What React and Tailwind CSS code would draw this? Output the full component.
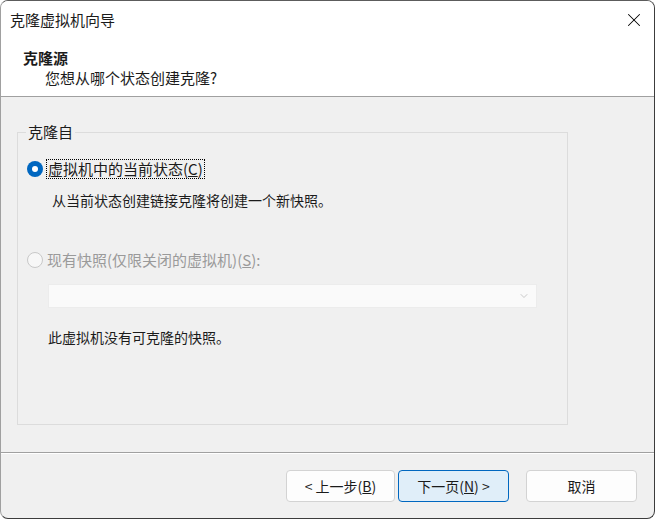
import { X, ChevronDown } from "lucide-react"

const font = { fontFamily: '"Noto Sans CJK SC", "Noto Sans", sans-serif' }

function Radio({ checked, disabled }) {
  if (checked) {
    return (
      <span className="w-[16px] h-[16px] rounded-full bg-[#0067c0] flex items-center justify-center shrink-0">
        <span className="w-[6px] h-[6px] rounded-full bg-white" />
      </span>
    )
  }
  return (
    <span
      className={
        "w-[16px] h-[16px] rounded-full border shrink-0 " +
        (disabled ? "border-[#c8c8c8] bg-[#f7f7f7]" : "border-[#5f5f5f] bg-white")
      }
    />
  )
}

function Button({ children, primary, className = "" }) {
  return (
    <button
      className={
        "h-[32px] rounded-[4px] border text-[14px] leading-[20px] text-[#1b1b1b] " +
        (primary ? "bg-[#e0eef9] border-[#0067c0] " : "bg-[#fdfdfd] border-[#d3d3d3] ") +
        className
      }
    >
      {children}
    </button>
  )
}

export default function App() {
  return (
    <div
      style={font}
      className="w-[655px] h-[519px] overflow-hidden rounded-[8px] border border-[#3c3c3c] border-l-[#a0a0a0] border-t-[#5c5c5c] bg-[#f0f0f0] flex flex-col text-[#1b1b1b]"
    >
      {/* Title bar + header */}
      <div className="bg-white h-[96px] border-b border-[#a0a0a0] flex flex-col shrink-0">
        <div className="h-[37px] flex items-center justify-between pl-[9px] pr-[9px]">
          <span className="text-[15px] leading-[20px]">克隆虚拟机向导</span>
          <X size={22} strokeWidth={1.1} className="text-black" />
        </div>
        <div className="pl-[22px] pt-[10px]">
          <div className="text-[15px] leading-[20px] font-bold">克隆源</div>
          <div className="pl-[22px] text-[15px] leading-[20px]">您想从哪个状态创建克隆?</div>
        </div>
      </div>

      {/* Body */}
      <div className="flex-1 pl-[16px] pt-[25px]">
        <fieldset className="w-[551px] h-[303px] border border-[#dcdcdc] px-0">
          <legend className="ml-[8px] px-[2px] text-[15px] leading-[20px]">克隆自</legend>
          <div className="flex flex-col pl-[9px] pt-[17px]">
            <div className="flex items-center gap-[2px] h-[20px]">
              <Radio checked />
              <span className="ml-[1px] border border-dotted border-black px-[1px] text-[15px] leading-[18px]">
                虚拟机中的当前状态(<span className="underline">C</span>)
              </span>
            </div>
            <div className="pl-[25px] mt-[11px] text-[14px] leading-[20px]">
              从当前状态创建链接克隆将创建一个新快照。
            </div>
            <div className="flex items-center gap-[4px] h-[20px] mt-[40px] text-[#9a9a9a]">
              <Radio disabled />
              <span className="text-[15px] leading-[20px]">
                现有快照(仅限关闭的虚拟机)(<span className="underline">S</span>):
              </span>
            </div>
            <div className="ml-[21px] mt-[14px] w-[489px] h-[24px] bg-[#fafafa] border border-[#ececec] flex items-center justify-end pr-[6px]">
              <ChevronDown size={12} strokeWidth={1.2} className="text-[#a8a8a8]" />
            </div>
            <div className="pl-[21px] mt-[19px] text-[14px] leading-[20px]">此虚拟机没有可克隆的快照。</div>
          </div>
        </fieldset>
      </div>

      {/* Footer */}
      <div className="h-[66px] shrink-0 border-t border-[#a0a0a0] flex flex-col">
        <div className="h-px bg-white" />
        <div className="flex items-center justify-end pr-[17px] pt-[16px]">
          <Button className="w-[109px]">&lt; 上一步(<span className="underline">B</span>)</Button>
          <div className="w-[3px]" />
          <Button primary className="w-[111px]">
            下一页(<span className="underline">N</span>) &gt;
          </Button>
          <div className="w-[17px]" />
          <Button className="w-[111px]">取消</Button>
        </div>
      </div>
    </div>
  )
}
